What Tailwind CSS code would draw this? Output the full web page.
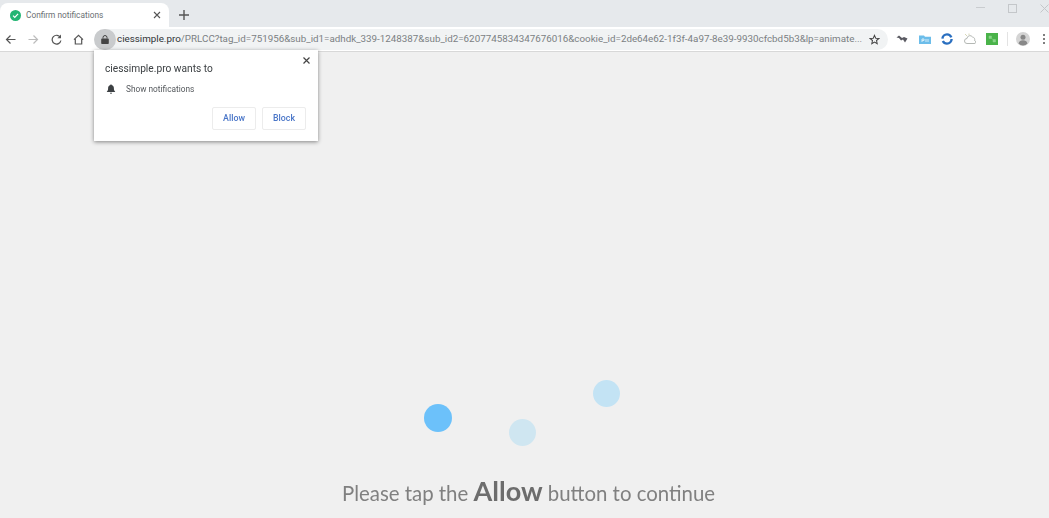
<!DOCTYPE html>
<html lang="en">
<head>
  <meta charset="UTF-8" />
  <title>Confirm notifications</title>
  <script src="https://cdn.jsdelivr.net/npm/@tailwindcss/browser@4"></script>
</head>
<body class="h-[518px] w-[1049px] overflow-hidden bg-[#f0f0f0] font-['Roboto',sans-serif]">
<div class="h-full blur-[0.35px]">

  <!-- tab strip -->
  <div class="flex h-[27px] bg-[#e6e9ec]">
    <div class="mt-[3px] flex h-6 w-[169px] items-center rounded-t-lg bg-white pl-[10px] pr-[8px]">
      <svg class="h-[11px] w-[11px]" viewBox="0 0 12 12"><circle cx="6" cy="6" r="6" fill="#22b573"/><path d="M3.3 6.2l1.9 1.900 3.600-3.800" fill="none" stroke="#fff" stroke-width="1.3"/></svg>
      <span class="ml-[5px] flex-1 pt-[1px] text-[8.3px] text-[#6b6f73]">Confirm notifications</span>
      <svg class="h-2 w-2" viewBox="0 0 8 8"><path d="M1 1l6 6M7 1l-6 6" stroke="#555" stroke-width="1.1"/></svg>
    </div>
    <svg class="ml-[10px] mt-[10px] h-[10px] w-[10px]" viewBox="0 0 10 10"><path d="M5 0v10M0 5h10" stroke="#555" stroke-width="1.4"/></svg>
    <div class="ml-auto flex items-start">
      <svg class="mt-[3px] h-[9px] w-[9px]" viewBox="0 0 9 9"><path d="M0 4.500h9" stroke="#c9cccf"/></svg>
      <svg class="ml-[23px] mt-[4px] h-[9px] w-[9px]" viewBox="0 0 9 9"><rect x=".5" y=".5" width="8" height="8" fill="none" stroke="#c4c7ca"/></svg>
      <svg class="ml-[23px] mt-[4px] h-[9px] w-[9px]" viewBox="0 0 9 9"><path d="M.5.500l8 8M8.500.500l-8 8" stroke="#c4c7ca"/></svg>
    </div>
  </div>

  <!-- toolbar -->
  <div class="flex h-[25px] items-center border-b border-[#d8d8d8] bg-white">
    <svg class="ml-[5px] h-[11px] w-[11px]" viewBox="0 0 11 11"><path d="M10.500 5.500H1.500M5.500 1.500l-4 4 4 4" fill="none" stroke="#555" stroke-width="1.2"/></svg>
    <svg class="ml-[12px] h-[11px] w-[11px]" viewBox="0 0 11 11"><path d="M.5 5.500h9M5.500 1.500l4 4-4 4" fill="none" stroke="#bcbcbc" stroke-width="1.2"/></svg>
    <svg class="ml-[12px] h-[11px] w-[11px]" viewBox="0 0 11 11"><path d="M9.400 3.500A4.400 4.400 0 1 0 9.900 6.500" fill="none" stroke="#555" stroke-width="1.2"/><path d="M10 .6v3.600H6.400z" fill="#555"/></svg>
    <svg class="ml-[11px] h-[11px] w-[11px]" viewBox="0 0 11 11"><path d="M1 5.600L5.500 1.400 10 5.600M2.300 5v5h6.400V5" fill="none" stroke="#555" stroke-width="1.2"/></svg>
    <div class="ml-[10px] flex h-[21px] w-[794px] items-center rounded-full bg-[#f1f3f4]">
      <div class="flex h-[21px] w-[22px] shrink-0 items-center justify-center rounded-full bg-[#c9cbcd]">
        <svg class="h-[9px] w-[8px]" viewBox="0 0 8 9"><path d="M1 3.500h6a.8.800 0 0 1 .8.800v3.900a.8.800 0 0 1-.8.800H1a.8.800 0 0 1-.8-.8V4.300a.8.800 0 0 1 .8-.8z" fill="#444"/><path d="M2 3.500V2.500a2 2 0 0 1 4 0v1" fill="none" stroke="#444"/></svg>
      </div>
      <span class="min-w-0 flex-1 whitespace-nowrap pl-[1px] pt-[1px] text-[9.8px] text-[#7b7f83]"><span class="text-[#303336]">ciessimple.pro</span>/PRLCC?tag_id=751956&amp;sub_id1=adhdk_339-1248387&amp;sub_id2=6207745834347676016&amp;cookie_id=2de64e62-1f3f-4a97-8e39-9930cfcbd5b3&amp;lp=animate...</span>
      <svg class="ml-[7px] mr-[8px] h-[11px] w-[11px] shrink-0" viewBox="0 0 24 24"><path d="M12 3l2.700 6.200 6.800.6-5.100 4.500 1.500 6.700L12 17.500 6.100 21l1.500-6.700-5.100-4.500 6.800-.6z" fill="none" stroke="#444" stroke-width="2.200"/></svg>
    </div>
    <svg class="ml-[8px] h-[10px] w-[12px]" viewBox="0 0 12 10"><path d="M.5 3.500L3 1.500l3 2.500 2-1 3.500 1.500L9 8.500 7 5.500 5 6.500 3 4z" fill="#5a5a62"/></svg>
    <svg class="ml-[11px] h-[11px] w-[12px]" viewBox="0 0 12 11"><path d="M0 1.500h5l1 1.200h6V10H0z" fill="#6cbdea"/><path d="M3 8V5h2v1.500H3M7 5v3M9 5v3" stroke="#d5edf9" fill="none"/></svg>
    <svg class="ml-[10px] h-[12px] w-[12px]" viewBox="0 0 12 12"><circle cx="6" cy="6" r="4.600" fill="none" stroke="#2a6fc0" stroke-width="2.400" stroke-dasharray="12 2.500"/></svg>
    <svg class="ml-[11px] h-[12px] w-[12px]" viewBox="0 0 12 12"><path d="M3 10.500h7a1.500 1.500 0 0 0 .5-3 2.500 2.500 0 0 0-2-3.500A3 3 0 0 0 3 5.500a2.500 2.500 0 0 0 0 5z" fill="none" stroke="#b4b8b4"/><path d="M1 1l2 2M5 .5V2" stroke="#d8d8b8"/></svg>
    <svg class="ml-[10px] h-[12px] w-[12px]" viewBox="0 0 12 12"><rect width="12" height="12" fill="#4ab34a"/><path d="M3 3h2.500v2.500H3zM7 6.500h2.500V9H7zM5.500 5.500L7 6.500" fill="#8ad48a" stroke="#8ad48a" stroke-width=".5"/></svg>
    <div class="ml-[9px] h-[14px] w-px bg-[#e3e3e3]"></div>
    <svg class="ml-[8px] h-[14px] w-[14px]" viewBox="0 0 14 14"><circle cx="7" cy="7" r="7" fill="#d4d4d4"/><circle cx="7" cy="5.200" r="2.500" fill="#888"/><path d="M2.500 11.500c.6-2.300 2.300-3.300 4.500-3.300s3.900 1 4.500 3.300A6 6 0 0 1 2.500 11.500z" fill="#888"/></svg>
    <div class="ml-[13px] flex flex-col gap-[2px]">
      <div class="h-[2px] w-[2px] rounded-full bg-[#555]"></div>
      <div class="h-[2px] w-[2px] rounded-full bg-[#555]"></div>
      <div class="h-[2px] w-[2px] rounded-full bg-[#555]"></div>
    </div>
  </div>

  <!-- permission popup -->
  <div class="absolute left-[94px] top-[50px] h-[91px] w-[224px] bg-white shadow-[0_1px_4px_rgba(0,0,0,0.45)]">
    <svg class="absolute right-[8px] top-[7px] h-[7px] w-[7px]" viewBox="0 0 7 7"><path d="M.5.500l6 6M6.500.500l-6 6" stroke="#444" stroke-width="1.200"/></svg>
    <p class="pl-[11px] pt-[11px] text-[10.2px] leading-[15px] text-[#3c4043]">ciessimple.pro wants to</p>
    <div class="mt-[7px] flex items-center pl-[12px]">
      <svg class="h-[10px] w-[10px]" viewBox="0 0 10 10"><path d="M5 .3c.4 0 .6.300.6.700 1.600.4 2.300 1.700 2.300 3.200 0 1.800.4 2.500 1.200 3.300v.5H.9v-.5c.8-.8 1.200-1.500 1.200-3.300 0-1.500.7-2.800 2.300-3.200 0-.4.200-.7.600-.7zM3.900 8.700h2.200A1.100 1.100 0 0 1 3.900 8.700z" fill="#3c4043"/></svg>
      <span class="ml-[10px] text-[8.3px] leading-[12px] text-[#55595d]">Show notifications</span>
    </div>
    <div class="mt-[12px] flex justify-end gap-[6px] pr-[12px]">
      <button class="h-[23px] w-[44px] rounded-[2px] border border-[#ececec] text-[8.8px] font-medium text-[#4a76c8]">Allow</button>
      <button class="h-[23px] w-[44px] rounded-[2px] border border-[#ececec] text-[8.8px] font-medium text-[#4a76c8]">Block</button>
    </div>
  </div>

  <!-- loader dots -->
  <div class="absolute left-[424px] top-[404px] h-[28px] w-[28px] rounded-full bg-[#6cc1fa]"></div>
  <div class="absolute left-[509px] top-[419px] h-[27px] w-[27px] rounded-full bg-[#cfe6f1]"></div>
  <div class="absolute left-[593px] top-[380px] h-[27px] w-[27px] rounded-full bg-[#c3e3f4]"></div>

  <p class="absolute left-[342px] top-[472px] whitespace-nowrap font-['Lato',sans-serif] text-[20.4px] leading-[38px] text-[#808080]">Please tap the <span class="text-[27px] font-bold text-[#6d6d6d]">Allow</span> button to continue</p>

</div>
</body>
</html>
